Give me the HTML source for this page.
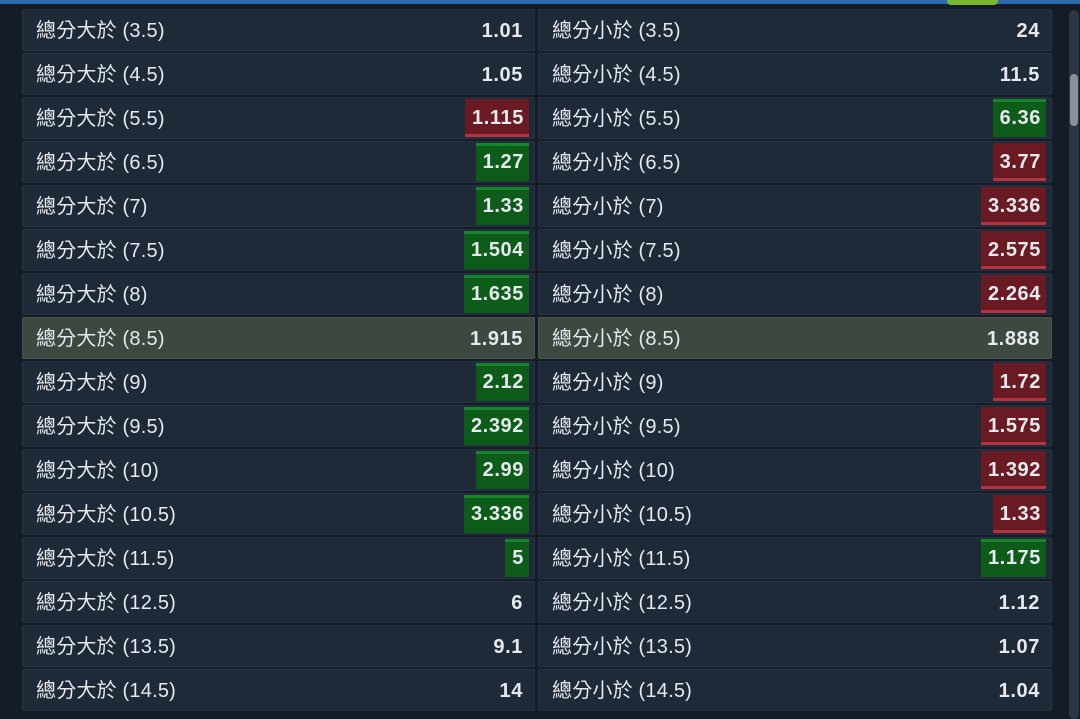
<!DOCTYPE html><html><head><meta charset="utf-8"><style>
*{margin:0;padding:0;box-sizing:border-box}
body{width:1080px;height:719px;background:#141d27;overflow:hidden;position:relative;font-family:"Liberation Sans","Noto Sans CJK TC",sans-serif;color:#e6e9ee}
.top{position:absolute;left:0;top:0;width:1080px;height:4px;background:#2b6cb0}
.top i{position:absolute;left:947px;top:0;width:51px;height:5px;background:#7ab72e;border-radius:0 0 4px 4px}
.row{position:absolute;height:42px;background:#1f2a38;border:1px solid #273344;border-radius:2px}
.row.h{background:#3d4840;border-color:#4a5548}
.lab{position:absolute;left:13px;top:1px;line-height:40px;font-size:20px;letter-spacing:0.2px}
.val{position:absolute;right:11px;top:1px;line-height:40px;font-size:20px;font-weight:bold;letter-spacing:0.6px}
.b{position:absolute;right:5px;top:1px;height:38px;line-height:39px;font-size:20px;font-weight:bold;padding:0 5px 0 7px;text-align:right;letter-spacing:0.6px}
.g{background:#0e5c1a;box-shadow:inset 0 3px 0 #16862b}
.r{background:#6a1a22;box-shadow:inset 0 -3px 0 #b8323f}
.sb{position:absolute;left:1069px;top:10px;width:10px;height:709px;background:#2c3644;border-radius:5px}
.sb i{position:absolute;left:1px;top:64px;width:8px;height:52px;background:#8a9199;border-radius:4px}
</style></head><body>
<div class="top"><i></i></div>
<div class="sb"><i></i></div>
<div id="c"></div>
<script>
var L=["3.5","4.5","5.5","6.5","7","7.5","8","8.5","9","9.5","10","10.5","11.5","12.5","13.5","14.5"];
var A=[["1.01",""],["1.05",""],["1.115","r"],["1.27","g"],["1.33","g"],["1.504","g"],["1.635","g"],["1.915",""],["2.12","g"],["2.392","g"],["2.99","g"],["3.336","g"],["5","g"],["6",""],["9.1",""],["14",""]];
var B=[["24",""],["11.5",""],["6.36","g"],["3.77","r"],["3.336","r"],["2.575","r"],["2.264","r"],["1.888",""],["1.72","r"],["1.575","r"],["1.392","r"],["1.33","r"],["1.175","g"],["1.12",""],["1.07",""],["1.04",""]];
var h="";
for(var i=0;i<16;i++){var t=9+44*i,hl=i==7?" h":"";
function cell(x,w,lab,v){return '<div class="row'+hl+'" style="left:'+x+'px;top:'+t+'px;width:'+w+'px"><div class="lab">'+lab+'</div>'+(v[1]?'<div class="b '+v[1]+'">'+v[0]+'</div>':'<div class="val">'+v[0]+'</div>')+'</div>';}
h+=cell(22,513,"總分大於 ("+L[i]+")",A[i]);
h+=cell(538,514,"總分小於 ("+L[i]+")",B[i]);}
document.getElementById("c").innerHTML=h;
</script>
</body></html>
